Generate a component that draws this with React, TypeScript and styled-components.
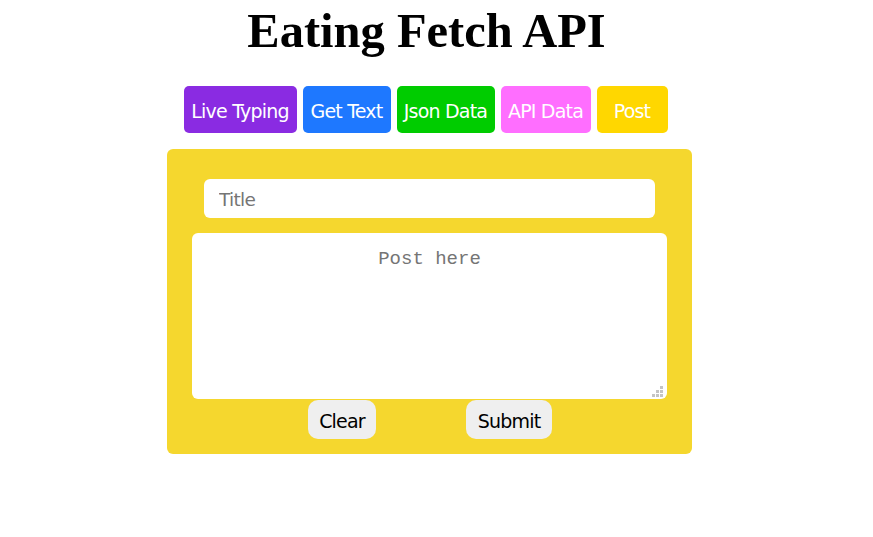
import React from "react";
import styled, { createGlobalStyle } from "styled-components";

const Global = createGlobalStyle`
  html, body { margin: 0; padding: 0; background: #ffffff; }
  body { font-family: "DejaVu Sans", Verdana, sans-serif; }
`;

const Page = styled.div`
  width: 853px;
  display: flex;
  flex-direction: column;
  align-items: center;
`;

const Heading = styled.h1`
  margin: 0;
  height: 60px;
  display: flex;
  align-items: center;
  font-family: "Liberation Serif", "Times New Roman", serif;
  font-weight: bold;
  font-size: 48.5px;
  color: #000;
`;

const NavRow = styled.nav`
  margin-top: 26px;
  margin-right: 2px;
  display: flex;
  gap: 6px;
`;

const NavButton = styled.button<{ $bg: string; $w: number }>`
  width: ${(p) => p.$w}px;
  height: 47px;
  border: none;
  border-radius: 5px;
  background: ${(p) => p.$bg};
  color: #ffffff;
  font-family: "DejaVu Sans", Verdana, sans-serif;
  font-size: 19px;
  letter-spacing: -0.8px;
  padding: 2px 0 0;
  display: flex;
  align-items: center;
  justify-content: center;
`;

const Panel = styled.form`
  margin-top: 16px;
  margin-left: 6px;
  width: 525px;
  box-sizing: border-box;
  padding: 30px 0 15px;
  background: #f5d72e;
  border-radius: 6px;
  display: flex;
  flex-direction: column;
  align-items: center;
`;

const TitleInput = styled.input`
  width: 451px;
  height: 39px;
  box-sizing: border-box;
  border: none;
  border-radius: 6px;
  padding: 2px 15px 0;
  font-family: "DejaVu Sans", Verdana, sans-serif;
  font-size: 18.5px;
  letter-spacing: -0.7px;
  outline: none;
  &::placeholder { color: #757575; }
`;

const AreaWrap = styled.div`
  position: relative;
  margin-top: 15px;
  width: 475px;
  height: 166px;
`;

const PostArea = styled.textarea`
  width: 100%;
  height: 100%;
  display: block;
  box-sizing: border-box;
  border: none;
  border-radius: 6px;
  padding: 15px 10px;
  font-family: "Liberation Mono", "Courier New", monospace;
  font-size: 19px;
  text-align: center;
  outline: none;
  resize: none;
  &::placeholder { color: #757575; }
`;

const Grip = styled.svg`
  position: absolute;
  right: 4px;
  bottom: 2px;
  width: 11px;
  height: 11px;
  pointer-events: none;
`;

const ActionRow = styled.div`
  margin-top: 1px;
  margin-left: 1px;
  display: flex;
  gap: 90px;
`;

const ActionButton = styled.button<{ $w: number }>`
  width: ${(p) => p.$w}px;
  height: 39px;
  border: none;
  border-radius: 10px;
  background: #efefef;
  color: #000;
  font-family: "DejaVu Sans", Verdana, sans-serif;
  font-size: 19px;
  letter-spacing: -0.8px;
  padding: 2px 0 0;
`;

const navItems = [
  { label: "Live Typing", bg: "#8a2be2", w: 113 },
  { label: "Get Text", bg: "#1e78ff", w: 88 },
  { label: "Json Data", bg: "#00cc00", w: 98 },
  { label: "API Data", bg: "#ff6eff", w: 90 },
  { label: "Post", bg: "#ffd700", w: 71 },
];

const gripDots: [number, number][] = [
  [8, 0],
  [4, 4],
  [8, 4],
  [0, 8],
  [4, 8],
  [8, 8],
];

export default function App() {
  return (
    <>
      <Global />
      <Page>
        <Heading>Eating Fetch API</Heading>
        <NavRow>
          {navItems.map((n) => (
            <NavButton key={n.label} $bg={n.bg} $w={n.w} type="button">
              {n.label}
            </NavButton>
          ))}
        </NavRow>
        <Panel onSubmit={(e) => e.preventDefault()}>
          <TitleInput placeholder="Title" />
          <AreaWrap>
            <PostArea placeholder="Post here" />
            <Grip viewBox="0 0 11 11">
              {gripDots.map(([x, y]) => (
                <rect key={`${x}-${y}`} x={x} y={y} width="3" height="3" fill="#c4c4c4" />
              ))}
            </Grip>
          </AreaWrap>
          <ActionRow>
            <ActionButton $w={68} type="button">Clear</ActionButton>
            <ActionButton $w={86} type="submit">Submit</ActionButton>
          </ActionRow>
        </Panel>
      </Page>
    </>
  );
}
